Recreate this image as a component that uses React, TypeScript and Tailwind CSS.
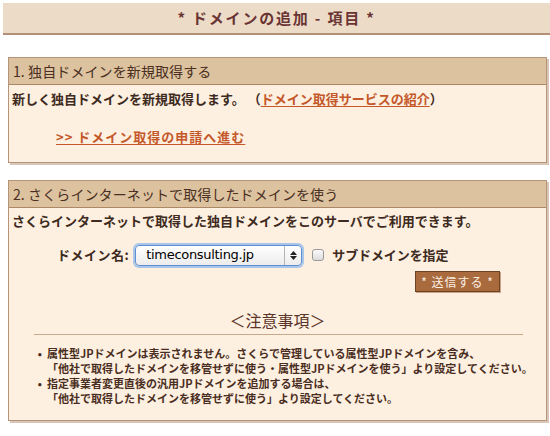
import React from "react";

const jp = "font-['Hiragino_Kaku_Gothic_Pro','Noto_Sans_CJK_JP',sans-serif]";

function Section({ title, children, className = "" }: { title: string; children: React.ReactNode; className?: string }) {
  return (
    <div className={`ml-[8px] w-[539px] border border-[#b59479] bg-[#fdf0e0] shadow-[2px_2px_0_#d9c6b8] ${className}`}>
      <div className="h-[27px] bg-[#dcc29f] border-b border-[#ad8867] flex items-center px-[4px] text-[14px] text-[#4a2f22] tracking-[0.1px]">
        {title}
      </div>
      {children}
    </div>
  );
}

export default function App() {
  return (
    <div className={`w-[550px] h-[436px] bg-white overflow-hidden ${jp}`}>
      <div className="ml-[3px] mt-[3px] h-[32px] bg-[#ecdcc7] border-b-2 border-[#b39179] flex items-center justify-center">
        <span className="text-[15px] font-bold text-[#6a3434] tracking-[1.8px]">* ドメインの追加 - 項目 *</span>
      </div>

      <Section title="1. 独自ドメインを新規取得する" className="mt-[22px] h-[106px]">
        <div className="pl-[3px] pt-[5px] text-[13px] font-bold text-[#3d2a20] leading-[18px]">
          新しく独自ドメインを新規取得します。 （
          <span className="text-[#c4582b] underline underline-offset-2">ドメイン取得サービスの紹介</span>）
        </div>
        <div className="pl-[47px] pt-[20px] text-[13px] font-bold leading-[18px] tracking-[1px]">
          <span className="text-[#c4582b] underline underline-offset-2">&gt;&gt; ドメイン取得の申請へ進む</span>
        </div>
      </Section>

      <Section title="2. さくらインターネットで取得したドメインを使う" className="mt-[17px] h-[241px]">
        <div className="pl-[3px] pt-[4px] text-[13px] font-bold text-[#3d2a20] leading-[18px]">
          さくらインターネットで取得した独自ドメインをこのサーバでご利用できます。
        </div>
        <div className="flex items-center mt-[14px] h-[22px]">
          <span className="ml-[48px] text-[13px] font-bold text-[#3d2a20] tracking-[0.5px]">ドメイン名:</span>
          <div className="ml-[6px] w-[167px] h-[21px] rounded-[4px] border border-[#5f8fcf] shadow-[0_0_0_2px_#a8c6ec] bg-gradient-to-b from-white to-[#ececec] flex items-center">
            <span className="flex-1 pl-[10px] text-[13px] text-black font-['Lucida_Grande','DejaVu_Sans',sans-serif] tracking-[-0.3px]">timeconsulting.jp</span>
            <div className="w-[17px] h-full border-l border-[#b5b5b5] flex flex-col items-center justify-center gap-[1px]">
              <svg width="7" height="4" viewBox="0 0 7 4"><path d="M0 4 L3.5 0 L7 4 Z" fill="#222" /></svg>
              <svg width="7" height="4" viewBox="0 0 7 4"><path d="M0 0 L3.5 4 L7 0 Z" fill="#222" /></svg>
            </div>
          </div>
          <div className="ml-[10px] w-[12px] h-[12px] rounded-[3px] border border-[#9a9a9a] bg-gradient-to-b from-[#fafafa] to-[#dcdcdc]" />
          <span className="ml-[8px] text-[13px] font-bold text-[#3d2a20] tracking-[-0.1px]">サブドメインを指定</span>
        </div>
        <div className="flex mt-[5px]">
          <div className="ml-[406px] w-[85px] h-[21px] bg-[#a96b3d] border border-[#6f4222] shadow-[1px_1px_0_#c9a68a] flex items-center justify-center text-[12px] text-[#fbefe4] tracking-[1px]">
            * 送信する *
          </div>
        </div>
        <div className="mt-[18px] flex justify-center text-[16px] text-[#5a3428] leading-[20px]">
          ＜注意事項＞
        </div>
        <div className="ml-[25px] w-[489px] mt-[4px] border-t border-[#c7a98c]" />
        <ul className="mt-[11px] text-[11px] font-bold text-[#4a2d22] leading-[15px]">
          <li className="flex">
            <span className="w-[38px] text-right pr-[5px]">•</span>
            <span>属性型JPドメインは表示されません。さくらで管理している属性型JPドメインを含み、<br />「他社で取得したドメインを移管せずに使う・属性型JPドメインを使う」より設定してください。</span>
          </li>
          <li className="flex">
            <span className="w-[38px] text-right pr-[5px]">•</span>
            <span>指定事業者変更直後の汎用JPドメインを追加する場合は、<br />「他社で取得したドメインを移管せずに使う」より設定してください。</span>
          </li>
        </ul>
      </Section>
    </div>
  );
}
